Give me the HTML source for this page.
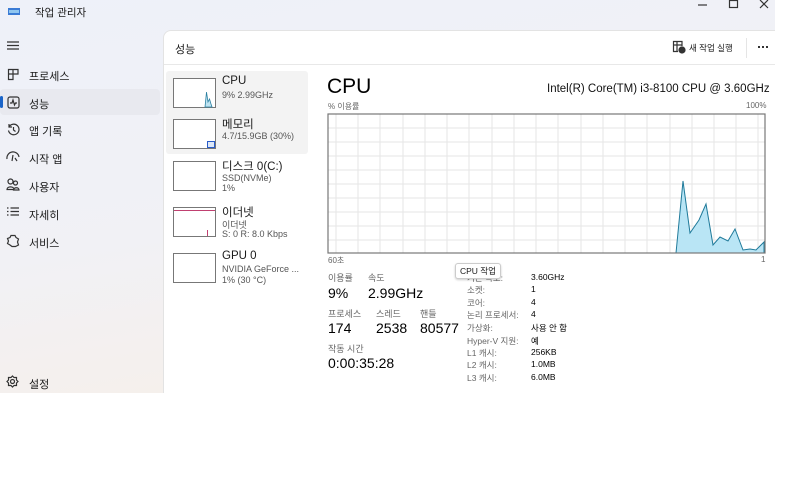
<!DOCTYPE html>
<html><head><meta charset="utf-8"><style>
*{margin:0;padding:0;box-sizing:border-box}
body{width:800px;height:500px;background:#fff;position:relative;overflow:hidden;font-family:"Liberation Sans","Noto Sans CJK KR",sans-serif;color:#1a1a1a}
.a{position:absolute;white-space:nowrap}
#win{position:absolute;left:0;top:0;width:775px;height:393px;background:linear-gradient(170deg,#eef1f9 0%,#f1f1f5 50%,#f8efe6 100%)}
#pane{position:absolute;left:163px;top:30px;width:612px;height:363px;background:#fff;border-top-left-radius:8px;border-left:1px solid #e3e3e3;border-top:1px solid #e3e3e3}
.nav{font-size:11px;color:#1a1a1a}
.s{font-size:9px;color:#555}
.th{position:absolute;left:173px;width:43px;height:30px;border:1px solid #777;background:#fff}
.lbl{font-size:9px;color:#666}
.big{font-size:14px;color:#000}
.k{font-size:8.5px;color:#666}
.v{font-size:8.5px;color:#000}
svg.i{position:absolute;fill:none;stroke:#333;stroke-width:1.2}
</style></head><body>
<div id="win">
  <div class="a" style="left:8px;top:8px;width:12px;height:7px;background:#3a7bd5"></div>
  <div class="a" style="left:9px;top:10px;width:10px;height:3px;background:#8fc6f0"></div>
  <div class="a" style="left:35px;top:5px;font-size:10.5px">작업 관리자</div>
  <svg class="i" style="left:697px;top:0" width="12" height="10"><path d="M1 5H10"/></svg>
  <svg class="i" style="left:728px;top:0" width="12" height="10"><rect x="1.5" y="0.5" width="8" height="7"/></svg>
  <svg class="i" style="left:759px;top:0" width="12" height="10"><path d="M1 0L9 8M9 0L1 8"/></svg>

  <svg class="i" style="left:7px;top:41px" width="13" height="10"><path d="M0 1H12M0 4.5H12M0 8H12"/></svg>
  <div class="a" style="left:0;top:89px;width:160px;height:26px;background:#e8e9ef;border-radius:4px"></div>
  <div class="a" style="left:0;top:96px;width:3px;height:12px;background:#1a64c8;border-radius:2px"></div>

  <svg class="i" style="left:7px;top:68px" width="13" height="13"><path d="M1.5 1.5H11V6H6V11.5H1.5Z M6 1.5V6 M1.5 6H6"/></svg>
  <div class="a nav" style="left:29px;top:68px">프로세스</div>
  <svg class="i" style="left:7px;top:96px" width="13" height="13"><rect x="1" y="1" width="11" height="11" rx="2"/><path d="M3 7H5L6 4L7.5 9L8.5 7H10"/></svg>
  <div class="a nav" style="left:29px;top:96px">성능</div>
  <svg class="i" style="left:7px;top:123px" width="13" height="13"><path d="M2 4A5.3 5.3 0 1 1 1.5 7.5M2 1V4H5M6.5 4V7L8.5 8.5"/></svg>
  <div class="a nav" style="left:29px;top:123px">앱 기록</div>
  <svg class="i" style="left:6px;top:151px" width="14" height="12"><path d="M1 8A6 6 0 0 1 13 6M7 4L6 10M9 7L11 10"/></svg>
  <div class="a nav" style="left:29px;top:151px">시작 앱</div>
  <svg class="i" style="left:6px;top:178px" width="14" height="13"><circle cx="4.5" cy="3.5" r="2.5"/><circle cx="9.5" cy="5" r="2"/><path d="M1 11.5C1 8 8 8 8 11.5ZM7.5 12C8 9 13 9 13 12Z"/></svg>
  <div class="a nav" style="left:29px;top:179px">사용자</div>
  <svg class="i" style="left:7px;top:207px" width="13" height="10"><path d="M0 1H1.5M0 4.5H1.5M0 8H1.5M3.5 1H12M3.5 4.5H12M3.5 8H12"/></svg>
  <div class="a nav" style="left:29px;top:207px">자세히</div>
  <svg class="i" style="left:6px;top:234px" width="14" height="14"><path d="M5 1.5L9 1.5L10 3.5L12.5 5L11.5 8L12.5 11L9.5 12.5L6 12.5L4 11L1.5 9.5L2.5 7L1.5 4.5L4 3.5Z"/></svg>
  <div class="a nav" style="left:29px;top:235px">서비스</div>
  <svg class="i" style="left:6px;top:375px" width="13" height="13"><circle cx="6.5" cy="6.5" r="2"/><path d="M6.5 1L8 2.5L10.5 2.5L10.5 5L12 6.5L10.5 8L10.5 10.5L8 10.5L6.5 12L5 10.5L2.5 10.5L2.5 8L1 6.5L2.5 5L2.5 2.5L5 2.5Z"/></svg>
  <div class="a nav" style="left:29px;top:376px">설정</div>
</div>
<div id="pane"></div>
<div class="a" style="left:164px;top:64px;width:611px;height:1px;background:#e8e8e8"></div>
<div class="a" style="left:175px;top:41px;font-size:11px">성능</div>
<svg class="i" style="left:672px;top:40px" width="14" height="14"><path d="M6 11.5H1.5V1.5H10V6M1.5 5H10M5 1.5V11.5"/><circle cx="10" cy="10" r="3" fill="#333"/></svg>
<div class="a" style="left:689px;top:42px;font-size:8.5px">새 작업 실행</div>
<div class="a" style="left:746px;top:38px;width:1px;height:20px;background:#e5e5e5"></div>
<div class="a" style="left:758px;top:46px;width:2px;height:2px;background:#333;box-shadow:4px 0 0 #333,8px 0 0 #333"></div>

<div class="a" style="left:166px;top:71px;width:142px;height:83px;background:#f3f3f3;border-radius:3px"></div>
<div class="th" style="top:78px"><svg width="43" height="30" style="position:absolute;left:0;top:0"><path d="M31 28 L32.5 13 L34 23 L35.5 20 L37 25 L38 28 Z" fill="#bfe4f2" stroke="#2a7fa0" stroke-width="0.8"/></svg></div>
<div class="a" style="left:222px;top:75px;font-size:11.5px">CPU</div>
<div class="a s" style="left:222px;top:90px">9% 2.99GHz</div>
<div class="th" style="top:119px"><div class="a" style="right:0;bottom:0;width:8px;height:7px;border:1px solid #2a5cc8;background:#dde8f8"></div></div>
<div class="a" style="left:222px;top:116px;font-size:11.5px">메모리</div>
<div class="a s" style="left:222px;top:131px">4.7/15.9GB (30%)</div>
<div class="th" style="top:161px"></div>
<div class="a" style="left:222px;top:158px;font-size:11.5px">디스크 0(C:)</div>
<div class="a s" style="left:222px;top:173px">SSD(NVMe)</div>
<div class="a s" style="left:222px;top:183px">1%</div>
<div class="th" style="top:207px"><div class="a" style="left:0;top:2px;width:41px;height:1px;background:#c04070"></div><div class="a" style="left:33px;top:22px;width:1px;height:6px;background:#c04070"></div></div>
<div class="a" style="left:222px;top:204px;font-size:11.5px">이더넷</div>
<div class="a s" style="left:222px;top:218px">이더넷</div>
<div class="a s" style="left:222px;top:229px">S: 0 R: 8.0 Kbps</div>
<div class="th" style="top:253px"></div>
<div class="a" style="left:222px;top:250px;font-size:11.5px">GPU 0</div>
<div class="a s" style="left:222px;top:264px">NVIDIA GeForce ...</div>
<div class="a s" style="left:222px;top:275px">1% (30 °C)</div>

<div class="a" style="left:327px;top:75px;font-size:21px;color:#000">CPU</div>
<div class="a" style="left:547px;top:83px;font-size:11.5px;color:#111">Intel(R) Core(TM) i3-8100 CPU @ 3.60GHz</div>
<div class="a lbl" style="left:328px;top:101px;font-size:8px">% 이용률</div>
<div class="a lbl" style="left:746px;top:101px;font-size:8px">100%</div>
<svg class="a" style="left:327px;top:113px" width="440" height="142">
  <g stroke="#e6e6e6" stroke-width="1">
    <path d="M9 1V140M31 1V140M53 1V140M76 1V140M98 1V140M120 1V140M142 1V140M165 1V140M187 1V140M209 1V140M231 1V140M254 1V140M276 1V140M298 1V140M320 1V140M343 1V140M365 1V140M387 1V140M409 1V140M431 1V140"/>
    <path d="M1 15H438M1 29H438M1 43H438M1 57H438M1 71H438M1 85H438M1 99H438M1 113H438M1 127H438"/>
  </g>
  <path d="M349 140 L356 68 L363 120 L372 107 L379 91 L386 132 L393 124 L401 128 L408 116 L416 137 L423 136 L429 137 L437 129 L437 140 Z" fill="#b9e5f5" stroke="#1f7a9a" stroke-width="1"/>
  <rect x="1" y="1" width="437" height="139" fill="none" stroke="#777" stroke-width="1.2"/>
</svg>
<div class="a lbl" style="left:328px;top:255px;font-size:8px">60초</div>
<div class="a lbl" style="left:761px;top:255px;font-size:8px">1</div>

<div class="a lbl" style="left:328px;top:271px">이용률</div>
<div class="a lbl" style="left:368px;top:271px">속도</div>
<div class="a big" style="left:328px;top:285px">9%</div>
<div class="a big" style="left:368px;top:285px">2.99GHz</div>
<div class="a lbl" style="left:328px;top:307px">프로세스</div>
<div class="a lbl" style="left:376px;top:307px">스레드</div>
<div class="a lbl" style="left:420px;top:307px">핸들</div>
<div class="a big" style="left:328px;top:320px">174</div>
<div class="a big" style="left:376px;top:320px">2538</div>
<div class="a big" style="left:420px;top:320px">80577</div>
<div class="a lbl" style="left:328px;top:342px">작동 시간</div>
<div class="a big" style="left:328px;top:355px">0:00:35:28</div>

<div class="a k" style="left:467px;top:272px">기본 속도:</div><div class="a v" style="left:531px;top:272px">3.60GHz</div>
<div class="a k" style="left:467px;top:284px">소켓:</div><div class="a v" style="left:531px;top:284px">1</div>
<div class="a k" style="left:467px;top:297px">코어:</div><div class="a v" style="left:531px;top:297px">4</div>
<div class="a k" style="left:467px;top:309px">논리 프로세서:</div><div class="a v" style="left:531px;top:309px">4</div>
<div class="a k" style="left:467px;top:322px">가상화:</div><div class="a v" style="left:531px;top:322px">사용 안 함</div>
<div class="a k" style="left:467px;top:335px">Hyper-V 지원:</div><div class="a v" style="left:531px;top:335px">예</div>
<div class="a k" style="left:467px;top:347px">L1 캐시:</div><div class="a v" style="left:531px;top:347px">256KB</div>
<div class="a k" style="left:467px;top:359px">L2 캐시:</div><div class="a v" style="left:531px;top:359px">1.0MB</div>
<div class="a k" style="left:467px;top:372px">L3 캐시:</div><div class="a v" style="left:531px;top:372px">6.0MB</div>
<div class="a" style="left:455px;top:263px;padding:1px 4px;font-size:8.5px;background:#fff;border:1px solid #ccc;border-radius:3px;box-shadow:0 1px 2px rgba(0,0,0,.2)">CPU 작업</div>
</body></html>
